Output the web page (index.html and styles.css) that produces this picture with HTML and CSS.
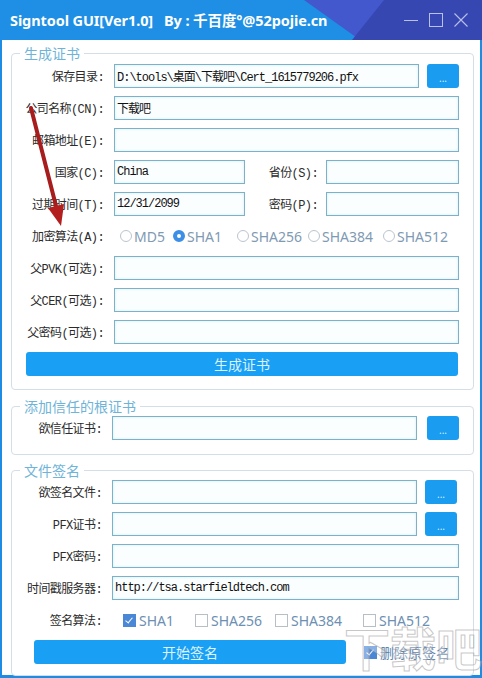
FILE: index.html
```html
<!DOCTYPE html>
<html lang="zh-CN">
<head>
    <meta charset="UTF-8">
    <meta name="viewport" content="width=device-width, initial-scale=1.0">
    <title>Signtool GUI</title>
    <link rel="stylesheet" href="styles.css">
</head>
<body>
    <div class="window">
        <div class="titlebar">
            <span class="title">Signtool GUI[Ver1.0]&nbsp;&nbsp;&nbsp;By : 千百度°@52pojie.cn</span>
            <div class="controls">
                <svg width="14" height="14" viewBox="0 0 14 14"><path d="M0 7.5h14" stroke="currentColor" stroke-width="1"/></svg>
                <svg width="14" height="14" viewBox="0 0 14 14"><rect x="0.5" y="0.5" width="13" height="13" fill="none" stroke="currentColor" stroke-width="1"/></svg>
                <svg width="14" height="14" viewBox="0 0 14 14"><path d="M0.5 0.5l13 13M13.5 0.5l-13 13" stroke="currentColor" stroke-width="1.1"/></svg>
            </div>
        </div>

        <div class="client">
            <!-- 生成证书 -->
            <fieldset class="group g-cert">
                <legend>生成证书</legend>
                <div class="row">
                    <label class="lbl">保存目录:</label>
                    <input class="txt" type="text" value="D:\tools\桌面\下载吧\Cert_1615779206.pfx">
                    <button class="browse">...</button>
                </div>
                <div class="row">
                    <label class="lbl">公司名称(CN):</label>
                    <input class="txt" type="text" value="下载吧">
                </div>
                <div class="row">
                    <label class="lbl">邮箱地址(E):</label>
                    <input class="txt" type="text" value="">
                </div>
                <div class="row">
                    <label class="lbl">国家(C):</label>
                    <input class="txt short" type="text" value="China">
                    <label class="lbl lbl2">省份(S):</label>
                    <input class="txt" type="text" value="">
                </div>
                <div class="row">
                    <label class="lbl">过期时间(T):</label>
                    <input class="txt short" type="text" value="12/31/2099">
                    <label class="lbl lbl2">密码(P):</label>
                    <input class="txt" type="text" value="">
                </div>
                <div class="row">
                    <label class="lbl">加密算法(A):</label>
                    <div class="radios">
                        <span class="opt"><i class="radio"></i>MD5</span>
                        <span class="opt"><i class="radio on"></i>SHA1</span>
                        <span class="opt"><i class="radio"></i>SHA256</span>
                        <span class="opt"><i class="radio"></i>SHA384</span>
                        <span class="opt"><i class="radio"></i>SHA512</span>
                    </div>
                </div>
                <div class="row">
                    <label class="lbl">父PVK(可选):</label>
                    <input class="txt" type="text" value="">
                </div>
                <div class="row">
                    <label class="lbl">父CER(可选):</label>
                    <input class="txt" type="text" value="">
                </div>
                <div class="row">
                    <label class="lbl">父密码(可选):</label>
                    <input class="txt" type="text" value="">
                </div>
                <button class="action make">生成证书</button>
            </fieldset>

            <!-- 添加信任的根证书 -->
            <fieldset class="group g-root">
                <legend>添加信任的根证书</legend>
                <div class="row">
                    <label class="lbl">欲信任证书:</label>
                    <input class="txt" type="text" value="">
                    <button class="browse">...</button>
                </div>
            </fieldset>

            <!-- 文件签名 -->
            <fieldset class="group g-sign">
                <legend>文件签名</legend>
                <div class="row">
                    <label class="lbl">欲签名文件:</label>
                    <input class="txt" type="text" value="">
                    <button class="browse">...</button>
                </div>
                <div class="row">
                    <label class="lbl">PFX证书:</label>
                    <input class="txt" type="text" value="">
                    <button class="browse">...</button>
                </div>
                <div class="row">
                    <label class="lbl">PFX密码:</label>
                    <input class="txt" type="text" value="">
                </div>
                <div class="row">
                    <label class="lbl">时间戳服务器:</label>
                    <input class="txt" type="text" value="http://tsa.starfieldtech.com">
                </div>
                <div class="row">
                    <label class="lbl">签名算法:</label>
                    <div class="checks">
                        <span class="opt"><i class="check on"></i>SHA1</span>
                        <span class="opt"><i class="check"></i>SHA256</span>
                        <span class="opt"><i class="check"></i>SHA384</span>
                        <span class="opt"><i class="check"></i>SHA512</span>
                    </div>
                </div>
                <div class="row last">
                    <button class="action sign">开始签名</button>
                    <span class="opt del"><i class="check on"></i>删除原签名</span>
                </div>
            </fieldset>
        </div>

        <svg class="arrow" width="482" height="678" viewBox="0 0 482 678">
            <path d="M31 108 L56 206" stroke="#a71c1c" stroke-width="4" stroke-linecap="round"/>
            <polygon points="64,204 48,208 61,226" fill="#b31f1f"/>
        </svg>
        <div class="watermark">下载吧</div>
    </div>
</body>
</html>
```

FILE: styles.css
```css
body {
    margin: 0;
    font-family: 'Noto Sans', 'Noto Sans CJK SC', sans-serif;
    background-color: #ffffff;
}

.window {
    position: relative;
    width: 482px;
    height: 678px;
    background-color: #1e8ce2;
    overflow: hidden;
}

/* barra de titulo */
.titlebar {
    position: relative;
    height: 40px;
    display: flex;
    align-items: center;
    justify-content: space-between;
    padding: 0 14px 0 10px;
    background-color: #1e8fe4;
}
.titlebar::before {
    content: "";
    position: absolute;
    inset: 0;
    background-color: #4358cc;
    clip-path: polygon(304px 0, 482px 0, 482px 40px, 360px 40px);
}
.titlebar::after {
    content: "";
    position: absolute;
    inset: 0;
    background-color: #3747b2;
    clip-path: polygon(384px 0, 482px 0, 482px 40px, 352px 40px);
}
.title {
    position: relative;
    z-index: 1;
    color: #ffffff;
    font-size: 14.5px;
    font-weight: bold;
    letter-spacing: -0.1px;
    padding-bottom: 1px;
}
.controls {
    position: relative;
    z-index: 1;
    display: flex;
    gap: 11px;
    color: #b9c1ea;
}

.client {
    height: 635px;
    margin: 0 2px;
    padding: 5px 6px 0 9px;
    box-sizing: border-box;
    background-color: #ffffff;
}

/* grupos */
.group {
    margin: 0;
    padding: 3px 14px 13px 0;
    border: 1px solid #d3dee6;
    border-radius: 4px;
    min-width: 0;
}
.group legend {
    margin-left: 8px;
    padding: 0 4px;
    font-family: 'Noto Sans CJK SC', sans-serif;
    font-size: 14px;
    line-height: 16px;
    color: #6fb4d8;
}
.g-root {
    margin-top: 8px;
    padding: 2px 14px 6px 0;
}
.g-sign {
    margin-top: 7px;
    padding: 2px 14px 11px 0;
}

.row {
    display: flex;
    align-items: center;
    height: 24px;
    margin-bottom: 8px;
}
.lbl {
    flex: none;
    width: 92px;
    margin-right: 10px;
    text-align: right;
    font-family: 'Liberation Mono', 'Noto Sans CJK SC', monospace;
    font-size: 12px;
    letter-spacing: -0.6px;
    color: #2b2b2b;
    white-space: nowrap;
}
.g-root .lbl,
.g-sign .lbl {
    width: 90px;
}
.lbl2 {
    width: 73px;
    margin-left: 0;
    margin-right: 8px;
}

.txt {
    flex: 1;
    min-width: 0;
    height: 24px;
    box-sizing: border-box;
    margin: 0;
    padding: 0 2px;
    border: 1px solid #7db2c6;
    background-color: #fbfeff;
    box-shadow: inset 0 0 3px #cfeef8;
    font-family: 'Liberation Mono', 'Noto Sans CJK SC', monospace;
    font-size: 12px;
    letter-spacing: -1px;
    color: #111111;
    outline: none;
}
.txt.short {
    flex: none;
    width: 131px;
}

.browse {
    flex: none;
    width: 32px;
    height: 24px;
    margin-left: 8px;
    padding: 4px 0 0;
    border: none;
    border-radius: 3px;
    background-color: #1a9cf0;
    color: #d6efff;
    font-family: 'Noto Sans', sans-serif;
    font-size: 10px;
    line-height: 10px;
}
.g-root .browse {
    margin-left: 10px;
}
.g-sign .browse {
    margin-right: 2px;
}

.action {
    height: 24px;
    border: none;
    border-radius: 3px;
    background-color: #19a0f5;
    color: #dcf2ff;
    font-family: 'Noto Sans CJK SC', sans-serif;
    font-size: 14px;
    padding: 0;
}
.make {
    display: block;
    width: 432px;
    margin-left: 14px;
}
.sign {
    width: 312px;
    margin-left: 22px;
    margin-right: 18px;
}
.row.last {
    margin-bottom: 0;
}

/* opciones */
.radios,
.checks {
    display: grid;
    align-items: center;
    font-size: 14px;
    color: #7f9ab3;
}
.radios {
    grid-template-columns: 53px 64px 71px 75px auto;
    margin-left: 6px;
}
.checks {
    grid-template-columns: 72px 80px 88px auto;
    margin-left: 11px;
    color: #6d8fb2;
}
.opt {
    display: flex;
    align-items: center;
    white-space: nowrap;
}
.radio {
    width: 12px;
    height: 12px;
    box-sizing: border-box;
    margin-right: 2px;
    border: 1px solid #bcc5cd;
    border-radius: 50%;
    background-color: #ffffff;
}
.radio.on {
    border: 4px solid #3c8ee6;
}
.check {
    position: relative;
    width: 13px;
    height: 13px;
    box-sizing: border-box;
    margin-right: 3px;
    border: 1px solid #b6bec6;
    background-color: #ffffff;
}
.check.on {
    border-color: #4a88d6;
    background-color: #4a88d6;
}
.check.on::after {
    content: "";
    position: absolute;
    left: 3px;
    top: 1px;
    width: 3px;
    height: 6px;
    border: solid #ffffff;
    border-width: 0 1.5px 1.5px 0;
    transform: rotate(40deg);
}
.del {
    font-family: 'Noto Sans CJK SC', sans-serif;
    font-size: 14px;
    color: #5f86b0;
}

/* anotaciones encima */
.arrow {
    position: absolute;
    left: 0;
    top: 0;
    pointer-events: none;
}
.watermark {
    position: absolute;
    left: 344px;
    top: 616px;
    font-family: 'Noto Sans CJK SC', sans-serif;
    font-size: 46px;
    font-weight: bold;
    line-height: 60px;
    color: rgba(255, 255, 255, 0.35);
    -webkit-text-stroke: 1px rgba(150, 150, 150, 0.55);
    pointer-events: none;
}
```
